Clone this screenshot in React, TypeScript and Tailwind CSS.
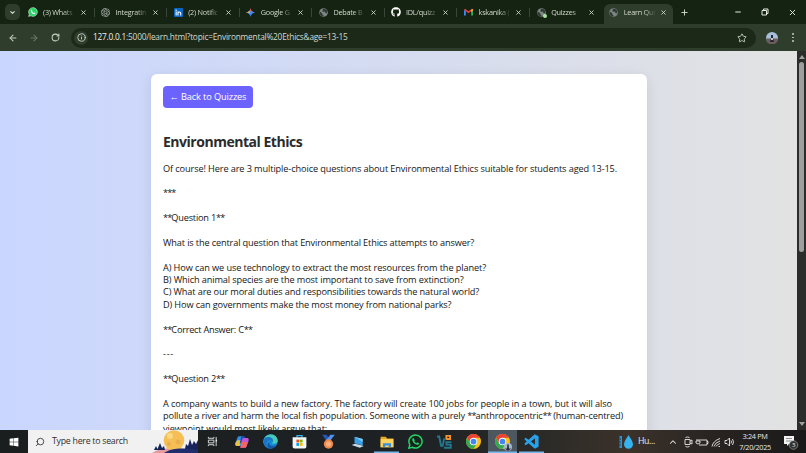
import type { ReactNode } from "react";
import { FaGithub, FaWindows } from "react-icons/fa";
import { BiLogoVisualStudio } from "react-icons/bi";
import { ArrowLeft, ArrowRight, ChevronDown, ChevronUp, Info, Minus, Plus, RotateCw, Search, Star, X } from "lucide-react";
import { SiOpenai } from "react-icons/si";

function WhatsApp({ className, ring }: { className: string; ring?: boolean }) {
  return (
    <svg viewBox="0 0 24 24" className={className}>
      <path
        d="M12 1.5a10.5 10.5 0 0 0-9.1 15.7L1.4 22.6l5.6-1.4A10.5 10.5 0 1 0 12 1.5z"
        fill={ring ? "#17231d" : "#25d366"}
        stroke={ring ? "#25d366" : "#e8ffe8"}
        strokeWidth={ring ? 2.4 : 1.2}
      />
      <path
        d="M8.6 6.5c-.5 0-1.9 1-1.9 2.8 0 3 4.600 8 8.200 8 1.600 0 2.800-1.300 2.800-2.700l-2.800-1.500-1.300 1.500c-1.500-.5-3-2-3.700-3.400l1-1.300z"
        fill={ring ? "#25d366" : "#fff"}
      />
    </svg>
  );
}

function Globe() {
  return (
    <svg viewBox="0 0 24 24" className="size-[9px]">
      <circle cx="12" cy="12" r="11.500" fill="#7d8580" />
      <path d="M3 10l5 3 1 4 3 2-1 4C5 22 1.500 17 1.500 12zM9 2l2 3-3 3 3 2 5-1 1 4 4 1 1-6-4-5z" fill="#2c3830" />
    </svg>
  );
}

function LinkedIn() {
  return (
    <svg viewBox="0 0 18 18" className="size-[9px]">
      <rect width="18" height="18" rx="1.500" fill="#0a66c2" />
      <circle cx="4.300" cy="4.300" r="1.500" fill="#fff" />
      <path d="M4.300 7v8M8 15V7M8 15v-4.500c0-3 5.500-3.500 5.500.5v4" fill="none" stroke="#fff" strokeWidth="2.200" />
    </svg>
  );
}

function Gmail() {
  return (
    <svg viewBox="0 0 24 18" className="w-[9px] h-[8px]">
      <path d="M0 3v15h5V7z" fill="#4285f4" />
      <path d="M24 3v15h-5V7z" fill="#34a853" />
      <path d="M0 3l12 9 12-9-3-3-9 7-9-7z" fill="#ea4335" />
      <path d="M19 4v5l5-4V2l-2-2z" fill="#fbbc04" />
    </svg>
  );
}

function Gemini() {
  return (
    <svg viewBox="0 0 24 24" className="size-[9px]">
      <path d="M12 0c1 7 5 11 12 12H0c7-1 11-5 12-12z" fill="#e9685d" />
      <path d="M0 12c7 1 11 5 12 12 1-7 5-11 12-12L12 8z" fill="#3f8bf5" />
      <path d="M0 12c4-.5 7-2 9-4l2 7c-2-2-6-2.500-11-3z" fill="#f2c13d" />
    </svg>
  );
}

function Chrome({ className }: { className: string }) {
  return (
    <svg viewBox="0 0 24 24" className={className}>
      <circle cx="12" cy="12" r="12" fill="#fbc116" />
      <path d="M1.600 6A12 12 0 0 1 22.400 6H12l-5.200 9z" fill="#ea4335" />
      <path d="M1.600 6a12 12 0 0 0 10.400 18l5.200-9H6.800z" fill="#34a853" />
      <circle cx="12" cy="12" r="6" fill="#fff" />
      <circle cx="12" cy="12" r="4.600" fill="#4285f4" />
    </svg>
  );
}

const tabs: { title: string; icon: ReactNode }[] = [
  { title: "(3) Whats", icon: <WhatsApp className="size-[10px]" /> },
  { title: "Integratin", icon: <SiOpenai className="size-[9px] text-[#b9c0b8]" /> },
  { title: "(2) Notific", icon: <LinkedIn /> },
  { title: "Google G", icon: <Gemini /> },
  { title: "Debate B", icon: <Globe /> },
  { title: "IDL/quizz", icon: <FaGithub className="size-[10px] text-white" /> },
  { title: "kskanika (", icon: <Gmail /> },
  { title: "Quizzes", icon: <Globe /> },
  { title: "Learn Qui", icon: <Globe /> },
];

const lines: { text: string; className?: string }[] = [
  { text: "Of course! Here are 3 multiple-choice questions about Environmental Ethics suitable for students aged 13-15.", className: "tracking-[-0.112px]" },
  { text: "" },
  { text: "***" },
  { text: "" },
  { text: "**Question 1**", className: "tracking-[-0.200px]" },
  { text: "" },
  { text: "What is the central question that Environmental Ethics attempts to answer?", className: "tracking-[-0.145px]" },
  { text: "" },
  { text: "A) How can we use technology to extract the most resources from the planet?", className: "tracking-[-0.108px]" },
  { text: "B) Which animal species are the most important to save from extinction?", className: "tracking-[-0.130px]" },
  { text: "C) What are our moral duties and responsibilities towards the natural world?", className: "tracking-[-0.138px]" },
  { text: "D) How can governments make the most money from national parks?", className: "tracking-[-0.130px]" },
  { text: "" },
  { text: "**Correct Answer: C**", className: "tracking-[-0.240px]" },
  { text: "" },
  { text: "---", className: "tracking-[0.700px]" },
  { text: "" },
  { text: "**Question 2**", className: "tracking-[-0.200px]" },
  { text: "" },
  { text: "A company wants to build a new factory. The factory will create 100 jobs for people in a town, but it will also", className: "tracking-[-0.093px]" },
  { text: "pollute a river and harm the local fish population. Someone with a purely **anthropocentric** (human-centred)", className: "tracking-[-0.134px]" },
  { text: "viewpoint would most likely argue that:", className: "tracking-[-0.080px]" },
];

// asterisks sit tighter than the rest of the line
function Line({ text, className = "tracking-[-0.130px]" }: { text: string; className?: string }) {
  return (
    <div className="h-[12.400px]">
      <span className={className}>
        {text.split(/(\*+)/).map((part, i) =>
          part.startsWith("*") ? (
            <span key={i} className="tracking-[-0.900px]">
              {part}
            </span>
          ) : (
            part
          ),
        )}
      </span>
    </div>
  );
}

function TabStrip() {
  return (
    <div className="flex h-6 shrink-0 bg-[#152313] pl-[5px] text-[#d3dad0]">
      <div className="mt-1 mr-[3px] flex h-4 w-[15px] items-center justify-center rounded-[5px] bg-[#2f3d2d]">
        <ChevronDown className="size-[7px]" strokeWidth={4} />
      </div>
      {tabs.map((tab, i) => {
        const active = i === tabs.length - 1;
        return (
          <div
            key={tab.title}
            className={`flex shrink-0 items-center pl-[5px] ${
              active ? "mt-1 h-5 w-[69px] rounded-t-[6px] bg-[#2f3d2d] pb-1" : "w-[72.600px]"
            }`}
          >
            <div className="relative flex w-[10px] justify-center">
              {tab.icon}
              {i === 7 && <span className="absolute -right-px -bottom-px size-[4px] rounded-full bg-[#a9e3a5]" />}
            </div>
            <span className="ml-[5px] w-[32px] text-[7.300px] leading-[12px] tracking-[-0.260px] whitespace-nowrap [mask-image:linear-gradient(to_right,#000_62%,rgba(0,0,0,0.15)_95%)]">
              {tab.title}
            </span>
            <X className="ml-[4.500px] size-[7px]" strokeWidth={3} />
            {i < 7 && <span className="ml-[7px] h-[9px] w-px bg-[#39473a]" />}
          </div>
        );
      })}
      <Plus className="mt-2 ml-[7.500px] size-[9px]" strokeWidth={2.500} />
      <div className="ml-auto flex w-[72px] items-center justify-between pr-[9px] text-[#e6ebe4]">
        <Minus className="size-[8px]" strokeWidth={3} />
        <svg viewBox="0 0 8 8" className="size-[8px]" fill="none" stroke="currentColor">
          <path d="M1 2.500h4.500V7H1zM2.500 2V1H7v4.500H6" />
        </svg>
        <X className="size-[9px]" strokeWidth={2.500} />
      </div>
    </div>
  );
}

function Toolbar() {
  return (
    <div className="flex h-[27px] shrink-0 items-center bg-[#2f3d2d] text-[#c6cec3]">
      <ArrowLeft className="ml-2 size-[10px]" strokeWidth={2.500} />
      <ArrowRight className="ml-[11px] size-[10px] text-[#6d786b]" strokeWidth={2.500} />
      <RotateCw className="ml-[12px] size-[9px]" strokeWidth={2.800} />
      <div className="ml-[11px] flex h-5 w-[685px] items-center rounded-full bg-[#1c2918] pl-[3px] pr-[9px]">
        <div className="flex size-[14px] items-center justify-center rounded-full bg-[#2f3d2d]">
          <Info className="size-[9px]" strokeWidth={2.500} />
        </div>
        <span className="ml-[5px] text-[8.300px] tracking-[-0.212px] whitespace-nowrap text-[#d3dad0]">
          <span className="text-[#eef2ec]">127.0.0.1</span>:5000/learn.html?topic=Environmental%20Ethics&amp;age=13-15
        </span>
        <Star className="ml-auto size-[10px]" strokeWidth={2.200} />
      </div>
      <svg viewBox="0 0 12 12" className="ml-[10px] size-[12px]">
        <circle cx="6" cy="6" r="6" fill="#a9bed8" />
        <path d="M0 6.500h12A6 6 0 0 1 0 6.500z" fill="#6c5c5c" />
        <path d="M5 3h2v3l1 4H4l1-4z" fill="#222838" />
        <path d="M5.200 6h1.600v2H5.200z" fill="#e8e8ef" />
      </svg>
      <div className="ml-[14px] flex flex-col gap-[2px]">
        <span className="size-[1.500px] rounded-full bg-[#c6cec3]" />
        <span className="size-[1.500px] rounded-full bg-[#c6cec3]" />
        <span className="size-[1.500px] rounded-full bg-[#c6cec3]" />
      </div>
    </div>
  );
}

function QuizPage() {
  return (
    <div className="flex h-[379px] shrink-0 overflow-hidden">
      <div className="h-full w-[797px] overflow-hidden bg-linear-to-r from-[#c9d6ff] to-[#e2e2e2] pt-[22.500px]">
        <div className="ml-[151px] h-[420px] w-[496px] rounded-[6px] bg-white px-3 pt-3 shadow-[0_4px_14px_rgba(0,0,0,0.1)]">
          <button className="flex h-[22px] w-[90px] items-center justify-center rounded-[4px] bg-[#6c63ff] text-[9.200px] tracking-[-0.110px] whitespace-nowrap text-white">
            ← Back to Quizzes
          </button>
          <h1 className="mt-[25.500px] text-[14px] leading-[18px] font-bold tracking-[-0.480px] whitespace-nowrap text-[#2b2b2b]">
            Environmental Ethics
          </h1>
          <div className="mt-[11.500px] text-[9.200px] leading-[12.400px] whitespace-pre text-[#161616]">
            {lines.map((line, i) => (
              <Line key={i} {...line} />
            ))}
          </div>
        </div>
      </div>
      <div className="flex w-[9px] flex-col items-center bg-[#2b2d2b] py-[4px]">
        <span className="border-x-[3px] border-b-[4px] border-x-transparent border-b-[#a0a0a0]" />
        <span className="mt-[3px] h-[190px] w-[5px] rounded-full bg-[#9e9e9e]" />
        <span className="mt-auto border-x-[3px] border-t-[4px] border-x-transparent border-t-[#a0a0a0]" />
      </div>
    </div>
  );
}

function Moon() {
  return (
    <svg viewBox="0 0 48 23" className="h-[23px] w-[48px]">
      <path d="M2 23C10 17 26 17 48 21v2z" fill="#e59a9b" />
      <circle cx="24" cy="10.500" r="10.300" fill="#f5bf55" />
      <circle cx="20" cy="6" r="3" fill="#fbd982" />
      <circle cx="28" cy="12" r="2.500" fill="#e8b04c" />
      <circle cx="19" cy="14" r="2" fill="#e8b04c" />
      <path d="M4 20l2-4 1.500 3 2.500-6 2 5 2-2 1 4zM35 19l1-5 2 2 2-7 2 6 2-4 2 3 2-4v13H35z" fill="#17245c" />
      <path d="M14 23c8-6 23-5 34-3v3z" fill="#202d6d" />
    </svg>
  );
}

const apps: { name: string; icon: ReactNode; className?: string }[] = [
  {
    name: "task-view",
    icon: (
      <svg viewBox="0 0 12 12" className="size-[11px]" fill="none" stroke="#e5e5e5">
        <path d="M1.500 1v1.500h6V1M1.500 11V9.500h6V11M1.500 4.500h6v3h-6zM10 1v10" />
        <path d="M9.500 5h1.500" strokeWidth="2" />
      </svg>
    ),
  },
  {
    name: "copilot",
    icon: (
      <svg viewBox="0 0 24 24" className="size-[14px]">
        <path d="M7 2h8l-5 17H4c-4 0-4-3-3-6L4 5c.6-2 1.500-3 3-3z" fill="#2c8fe8" />
        <path d="M1 13l3-4h7l-3 10H4c-4 0-4-3-3-6z" fill="#e6c341" />
        <path d="M13 5h7c4 0 4 3 3 6l-3 8c-.6 2-1.500 3-3 3H9z" fill="#c454d8" />
        <path d="M10 19l2-7h10l-2 7c-.6 2-1.500 3-3 3H9z" fill="#f26764" />
        <path d="M11 2h4c2 0 2 1 3 3h-5l-3 9H8z" fill="#2643a4" />
      </svg>
    ),
  },
  {
    name: "edge",
    icon: (
      <svg viewBox="0 0 24 24" className="size-[15px]">
        <circle cx="12" cy="12" r="11.500" fill="#1689d8" />
        <path d="M1 10C3-2 22-3 23.500 10c.4 5-5 7-9 5 2-3 1-6-3-6C7 9 3 11 1 15z" fill="#45cbb5" />
        <path d="M1 10c1-5 6-6 10-5 5 1 6 5 4 8 0-4-7-5-9 0-2 4 1 9 5 10.500C4 23 0 17 1 10z" fill="#1b74c8" />
        <path d="M10 13c-1 5 5 8 11 5-2 4-6 6-10 5.500-5-3-5-8-1-10.500z" fill="#1557a5" />
      </svg>
    ),
  },
  {
    name: "store",
    icon: (
      <svg viewBox="0 0 24 24" className="size-[15px]">
        <path d="M8 6V2.500h8V6" fill="none" stroke="#39b5ee" strokeWidth="2" />
        <path d="M1 5h22v15q0 3-3 3H4q-3 0-3-3z" fill="#f3f6f8" />
        <path d="M7 9h4.500v4.500H7z" fill="#f25022" />
        <path d="M12.500 9H17v4.500h-4.500z" fill="#7fba00" />
        <path d="M7 14.500h4.500V19H7z" fill="#00a4ef" />
        <path d="M12.500 14.500H17V19h-4.500z" fill="#ffb900" />
      </svg>
    ),
  },
  {
    name: "rewards",
    icon: (
      <svg viewBox="0 0 24 24" className="size-[15px]">
        <path d="M2 1h7l6 9-5 3z" fill="#2456b8" />
        <path d="M22 1h-7l-7 9 5 3z" fill="#4b8ff0" />
        <circle cx="12" cy="16" r="7.500" fill="#f08a4b" />
        <circle cx="12" cy="16" r="4" fill="#f8b080" />
      </svg>
    ),
  },
  {
    name: "computer",
    icon: (
      <svg viewBox="0 0 24 24" className="size-[14px]">
        <path d="M6 3l14 4v11L6 14z" fill="#3aa0e8" />
        <path d="M6 3l14 4v5z" fill="#7cc8f5" />
        <path d="M1 17l6-2 15 4-7 3z" fill="#c9dceb" />
      </svg>
    ),
  },
  {
    name: "explorer",
    className: "shadow-[inset_0_-1.500px_0_#76b9ed] w-[25px] mx-[2px]",
    icon: (
      <svg viewBox="0 0 24 24" className="size-[14px]">
        <path d="M1 3h9l2 3h11v15H1z" fill="#e9a821" />
        <path d="M1 7h22v14H1z" fill="#fcd462" />
        <path d="M5 21v-7h14v7h-4v-3H9v3z" fill="#3b91d9" />
      </svg>
    ),
  },
  { name: "whatsapp", icon: <WhatsApp className="size-[15px]" ring /> },
  {
    name: "vb",
    icon: (
      <svg viewBox="0 0 24 24" className="size-[15px]" fill="none" strokeWidth="3">
        <path d="M0 4h3.500l3 15H9l2.500-12M23 13h-8v4h7v5H11" stroke="#23788f" />
        <path d="M15 9V3h6v5h-6" stroke="#f0922f" />
      </svg>
    ),
  },
  { name: "chrome", icon: <Chrome className="size-[15px]" /> },
  {
    name: "chrome-profile",
    className: "bg-[#4d5760] shadow-[inset_0_-1.500px_0_#76b9ed] w-[29px]",
    icon: (
      <div className="relative">
        <Chrome className="size-[15px]" />
        <svg viewBox="0 0 10 10" className="absolute -right-[2px] -bottom-[2px] size-[8px]">
          <circle cx="5" cy="5" r="5" fill="#a6b6cc" />
          <path d="M1 7h8q-4 6-8 0z" fill="#59505a" />
          <path d="M4 2h2v3l1 4H3l1-4z" fill="#2b3040" />
        </svg>
      </div>
    ),
  },
  {
    name: "vscode",
    className: "shadow-[inset_0_-1.500px_0_#76b9ed] w-[25px] mx-[2px]",
    icon: <BiLogoVisualStudio className="size-[17px] text-[#27a3ee]" />,
  },
];

function Taskbar() {
  return (
    <div className="flex h-[23px] shrink-0 items-center bg-[linear-gradient(to_right,#1b1e1e_0%,#1e2225_52%,#2b2a27_67%,#3b322a_78%,#292422_88%,#1a1919_100%)] font-['Open_Sans',sans-serif] text-[#e8e8e8]">
      <div className="flex w-7 justify-center">
        <FaWindows className="size-[10px] text-white" />
      </div>
      <div className="flex h-full w-[170px] items-center bg-[#f1f1f1] pl-[7px] text-[#303030]">
        <Search className="size-[10px] -scale-x-100" strokeWidth={2} />
        <span className="ml-[7px] text-[8.800px] tracking-[-0.270px] whitespace-nowrap">Type here to search</span>
        <div className="ml-auto">
          <Moon />
        </div>
      </div>
      {apps.map((app) => (
        <div key={app.name} className={`flex h-full shrink-0 items-center justify-center ${app.className ?? "w-[29px]"}`}>
          {app.icon}
        </div>
      ))}
      <svg viewBox="0 0 14 14" className="ml-[73px] size-[14px] shrink-0">
        <path d="M.5 1H3v12H.5z" fill="#2795d6" />
        <path d="M.5 4H2M.5 7H2M.5 10H2" stroke="#1b3c55" />
        <path d="M9.500 0C8 3 5 6 5 9.300a4.500 4.500 0 0 0 9 0C14 6 11 3 9.500 0z" fill="#35b3ee" />
      </svg>
      <span className="ml-[5px] w-[17px] text-[8.800px] tracking-[-0.400px]">Hu...</span>
      <ChevronUp className="ml-[13px] size-[10px]" strokeWidth={2.500} />
      <svg viewBox="0 0 52 12" className="ml-[4px] h-[12px] w-[52px] shrink-0" fill="none" stroke="currentColor" strokeWidth=".9">
        <path d="M3 3.500h5v5H3zM8 5l2-1v4L8 7M3.500 1.500Q5.500.5 7.500 1.500M3.500 10.500q2 1 4 0" />
        <path d="M18 4h7v5h-8M25 5.500h1v2h-1M15 3v2M17 3v2M14 5h4v2q-2 2-4 0z" />
        <path d="M30 10.500Q31 5 38 2.500M32 10.500q1-4 6-5.500M34 10.500q1-2 4-3M36.500 10.500h1.500" />
        <path d="M43 4.500h2L47.500 2v8L45 7.500h-2zM49 4.500q1 1.500 0 3M50.500 3q2 3 0 6" />
      </svg>
      <div className="ml-[3px] flex w-[36px] shrink-0 flex-col items-center text-[7.300px] leading-[10.500px] tracking-[-0.320px] whitespace-nowrap">
        <span>3:24 PM</span>
        <span>7/20/2025</span>
      </div>
      <div className="relative ml-[10px]">
        <svg viewBox="0 0 16 16" className="size-[16px]">
          <path d="M1 2h10v8H6l-2 2v-2H1z" fill="#f3f3f3" />
          <path d="M3 4.500h6M3 7h6" stroke="#777" strokeWidth=".8" />
          <circle cx="10.500" cy="11" r="4.300" fill="#333" stroke="#aaa" strokeWidth=".6" />
        </svg>
        <span className="absolute top-[7px] left-[9px] text-[6px] leading-[8px]">3</span>
      </div>
    </div>
  );
}

export default function App() {
  return (
    <div className="flex h-[453px] w-[806px] flex-col overflow-hidden font-['Open_Sans','Noto_Sans',sans-serif]">
      <TabStrip />
      <Toolbar />
      <QuizPage />
      <Taskbar />
    </div>
  );
}
